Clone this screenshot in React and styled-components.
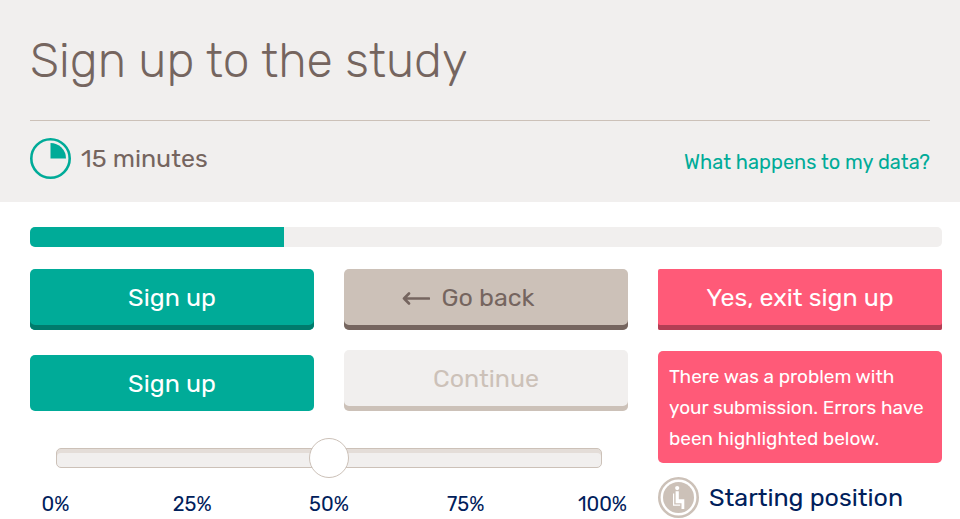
import React, { useState } from "react";
import styled, { createGlobalStyle, css } from "styled-components";

const c = {
  teal: "#00ab98",
  tealDark: "#007b6c",
  stone: "#ccc1b8",
  brown: "#75655f",
  mist: "#f1efee",
  pink: "#ff5a78",
  pinkDark: "#b33e54",
  navy: "#00205b",
};

const GlobalStyle = createGlobalStyle`
  *, *::before, *::after { box-sizing: border-box; }
  body {
    margin: 0;
    background: #fff;
    color: ${c.navy};
    font-family: Rubik, Inter, Roboto, sans-serif;
  }
`;

const Header = styled.header`
  background: ${c.mist};
  color: ${c.brown};
  padding: 30px 30px 22px;
`;

const Title = styled.h1`
  margin: 0;
  padding-bottom: 28px;
  border-bottom: 1px solid ${c.stone};
  font-size: 48px;
  font-weight: 300;
  line-height: 62px;
`;

const Meta = styled.div`
  display: flex;
  justify-content: space-between;
  align-items: center;
  padding-top: 17px;
`;

const Duration = styled.div`
  display: flex;
  align-items: center;
  gap: 10px;
  font-size: 25px;
  line-height: 42px;
`;

const DataLink = styled.a`
  color: ${c.teal};
  font-size: 20px;
  line-height: 30px;
  padding-top: 6px;
  text-decoration: none;
`;

const Main = styled.main`
  padding: 25px 18px 0 30px;
`;

const Progress = styled.div`
  height: 20px;
  border-radius: 5px;
  background: ${c.mist};
  overflow: hidden;
`;

const ProgressFill = styled.div`
  height: 100%;
  background: ${c.teal};
`;

const Columns = styled.div`
  display: grid;
  grid-template-columns: repeat(3, minmax(0, 1fr));
  column-gap: 30px;
  margin-top: 22px;
`;

const Controls = styled.div`
  grid-column: span 2;
`;

const ButtonGrid = styled.div`
  display: grid;
  grid-template-columns: repeat(2, minmax(0, 1fr));
  gap: 20px 30px;
  align-items: end;
`;

const tones = {
  primary: css`background: ${c.teal}; color: #fff; --edge: ${c.tealDark};`,
  secondary: css`background: ${c.stone}; color: ${c.brown}; --edge: ${c.brown};`,
  danger: css`background: ${c.pink}; color: #fff; --edge: ${c.pinkDark};`,
  muted: css`background: ${c.mist}; color: ${c.stone}; --edge: ${c.stone};`,
};

const Button = styled.button`
  display: flex;
  align-items: center;
  justify-content: center;
  gap: 12px;
  width: 100%;
  height: ${(p) => (p.$pressed ? 56 : 61)}px;
  margin: 0;
  padding: 2px ${(p) => (p.$leadingIcon ? 36 : 0)}px ${(p) => (p.$pressed ? 0 : 5)}px 0;
  border: 0;
  border-radius: ${(p) => (p.$square ? 2 : 5)}px;
  font-family: inherit;
  font-size: 25px;
  line-height: 32px;
  cursor: pointer;
  ${(p) => tones[p.$tone]}
  box-shadow: ${(p) => (p.$pressed ? "none" : "inset 0 -5px 0 var(--edge)")};
`;

const Range = styled.input`
  appearance: none;
  display: block;
  width: calc(100% - 52px);
  height: 40px;
  margin: 27px 26px 0;
  background: transparent;

  &::-webkit-slider-runnable-track {
    height: 20px;
    border: 1px solid ${c.stone};
    border-radius: 5px;
    background: ${c.mist};
    box-shadow: inset 0 4px 0 #e4ddd8;
  }

  &::-webkit-slider-thumb {
    appearance: none;
    width: 40px;
    height: 40px;
    margin-top: -11px;
    border: 1px solid ${c.stone};
    border-radius: 50%;
    background: #fff;
  }
`;

const Scale = styled.div`
  display: flex;
  justify-content: space-between;
  margin-top: 11px;
  font-size: 20px;
  line-height: 30px;
`;

const Mark = styled.span`
  display: flex;
  justify-content: center;
  width: 51px;
`;

const Aside = styled.div``;

const Alert = styled.p`
  margin: 21px 0 0;
  padding: 10px 10px 9px 11px;
  border-radius: 5px;
  background: ${c.pink};
  color: #fff;
  font-size: 19px;
  line-height: 31px;
`;

const Position = styled.div`
  display: flex;
  align-items: center;
  gap: 10px;
  margin-top: 14px;
  font-size: 25px;
  line-height: 41px;
`;

function ClockIcon() {
  return (
    <svg width="41" height="42" viewBox="0 0 41 42" aria-hidden="true">
      <circle cx="20.5" cy="20.5" r="19.2" fill="none" stroke={c.teal} strokeWidth="2.6" />
      <path d="M20.5 5A15.5 15.5 0 0 1 36 20.5H20.5Z" fill={c.teal} />
    </svg>
  );
}

function BackArrow() {
  return (
    <svg width="28" height="14" viewBox="0 0 28 14" fill="none" stroke="currentColor" strokeWidth="2.6" aria-hidden="true">
      <path d="M27 7.5H2M7 2.5L2 7.5l5 5" strokeLinecap="round" strokeLinejoin="round" />
    </svg>
  );
}

function SeatedIcon() {
  return (
    <svg width="41" height="41" viewBox="0 0 41 41" aria-hidden="true">
      <circle cx="20.5" cy="20.5" r="19.2" fill="#fff" stroke={c.stone} strokeWidth="2.6" />
      <circle cx="20.5" cy="20.5" r="15.5" fill={c.stone} />
      <circle cx="19.2" cy="11.1" r="2.1" fill="#fff" />
      <path d="M17.6 14.3h3.2v8h5.5v9.6h-2.8v-5.6h-5.9Z" fill="#fff" />
      <path d="M15.6 16.5v11.6h6.6" fill="none" stroke="#fff" strokeWidth="1.2" />
    </svg>
  );
}

const MARKS = [0, 25, 50, 75, 100];

export default function App() {
  const [value, setValue] = useState(50);
  const progress = 27.8;

  return (
    <>
      <GlobalStyle />
      <Header>
        <Title>Sign up to the study</Title>
        <Meta>
          <Duration>
            <ClockIcon />
            15 minutes
          </Duration>
          <DataLink href="#data">What happens to my data?</DataLink>
        </Meta>
      </Header>
      <Main>
        <Progress role="progressbar" aria-label="Sign up progress" aria-valuenow={progress}>
          <ProgressFill style={{ width: `${progress}%` }} />
        </Progress>
        <Columns>
          <Controls>
            <ButtonGrid>
              <Button $tone="primary">Sign up</Button>
              <Button $tone="secondary" $leadingIcon>
                <BackArrow />
                Go back
              </Button>
              <Button $tone="primary" $pressed>Sign up</Button>
              <Button $tone="muted" disabled>Continue</Button>
            </ButtonGrid>
            <Range
              type="range"
              min="0"
              max="100"
              aria-label="Percentage"
              value={value}
              onChange={(e) => setValue(Number(e.target.value))}
            />
            <Scale>
              {MARKS.map((m) => (
                <Mark key={m}>{m}%</Mark>
              ))}
            </Scale>
          </Controls>
          <Aside>
            <Button $tone="danger" $square>Yes, exit sign up</Button>
            <Alert role="alert">
              There was a problem with your submission. Errors have been highlighted below.
            </Alert>
            <Position>
              <SeatedIcon />
              Starting position
            </Position>
          </Aside>
        </Columns>
      </Main>
    </>
  );
}
